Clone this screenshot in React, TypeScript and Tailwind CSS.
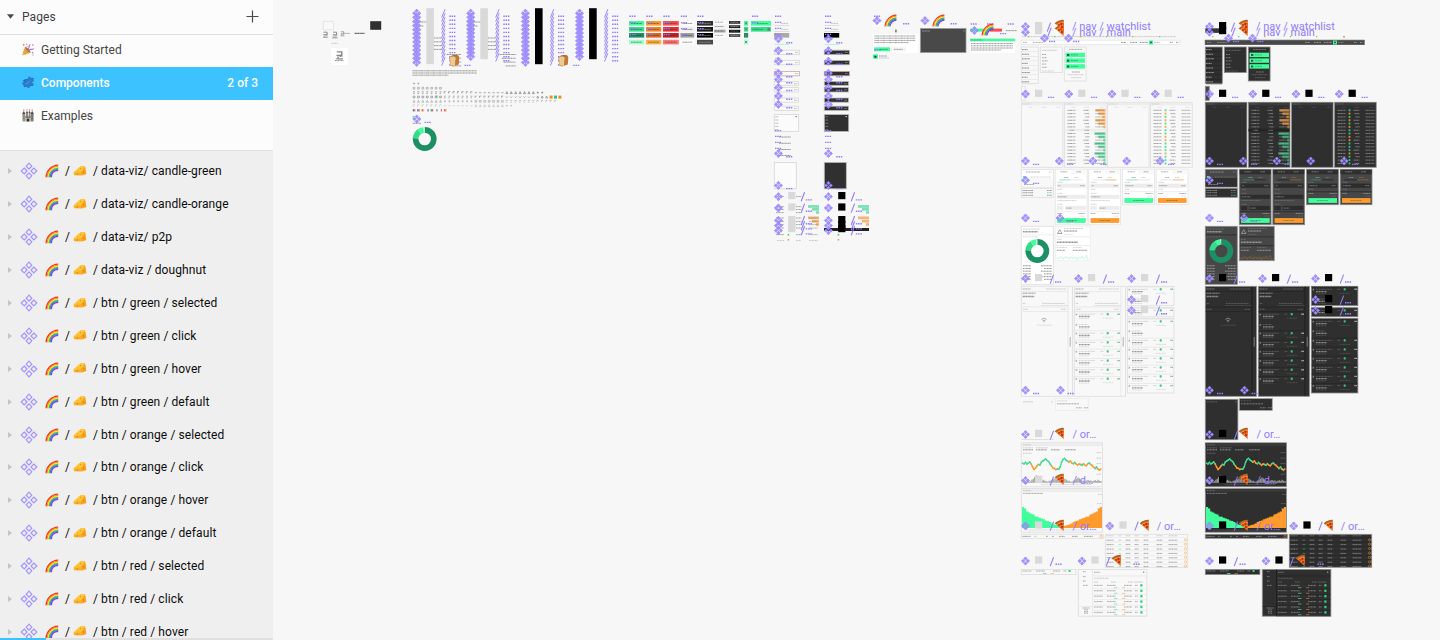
import type { ReactNode } from "react";

const PURPLE = "#8f7cfb";
const GREEN = "#41fd9b";
const ORANGE = "#ff9a2e";
const CANVAS_LEFT = 273;

/* ---------- emoji drawings ---------- */

function Rainbow({ className }: { className?: string }) {
  const bands = ["#ee3124", "#ff8a1f", "#ffe23a", "#45c832", "#2f8df0", "#8a3fd6"];
  return (
    <svg viewBox="0 0 14 14" className={className}>
      {bands.map((c, i) => (
        <path key={c} d={`M${1.1 + i * 1.05} 13.2 C${1.4 + i} ${7 + i * 0.5} ${6 + i * 0.5} ${1.6 + i} 13.2 ${1.2 + i * 1.05}`} fill="none" stroke={c} strokeWidth="1.25" />
      ))}
    </svg>
  );
}

function Cheese({ className }: { className?: string }) {
  return (
    <svg viewBox="0 0 14 12" className={className}>
      <path d="M.6 7.4 6.4 2.2Q9 .2 12 1.6L13.3 9 9.4 9.4 8.6 10.6 1 10.2Z" fill="#fbb028" />
      <path d="M.6 7.4 6.4 2.2Q9 .2 12 1.6L8 7.2Z" fill="#ffc83a" />
      <path d="M8 7.2 12 1.6 13.3 9 8.8 10.6Z" fill="#f7a220" />
      <circle cx="4.3" cy="9" r=".8" fill="#d9840c" />
      <circle cx="7.6" cy="3.6" r=".8" fill="#e8981b" />
      <circle cx="10.8" cy="7" r=".8" fill="#d9840c" />
      <circle cx="5" cy="5.8" r=".6" fill="#e8981b" />
    </svg>
  );
}

function Popper({ className }: { className?: string }) {
  return (
    <svg viewBox="0 0 14 14" className={className}>
      <path d="M.6 13.4 3.6 4.2 9.8 10.4Z" fill="#f2b544" />
      <path d="M2 9.6 4.8 12M2.9 6.8 7.2 11.2" stroke="#c9792c" strokeWidth=".9" />
      <path d="M3.6 4.2C5.6 4 9.8 8 9.8 10.4 7.6 10 4 6.8 3.6 4.2Z" fill="#a9713c" />
      <path d="M6.6 6.6C9 5.4 7.4 3.4 9.4 1.4M8 8C9.6 6 11.4 7.6 13.2 6" fill="none" stroke="#b469d8" strokeWidth="1.2" />
      <circle cx="2.4" cy="2" r=".9" fill="#e8706c" />
      <circle cx="5.6" cy="1.4" r=".8" fill="#8aa7ea" />
      <circle cx="12.2" cy="2.2" r="1" fill="#ef9c9c" />
      <circle cx="12" cy="10.4" r=".9" fill="#e28a5c" />
      <circle cx="12.4" cy="12.8" r=".7" fill="#7ba3ea" />
      <circle cx="6" cy="3.8" r=".8" fill="#f4a83e" />
    </svg>
  );
}

function Puzzle({ className }: { className?: string }) {
  return (
    <svg viewBox="0 0 14 14" className={className}>
      <path d="M5.6 3.8 7.4 3.4Q6.2.8 8.6.6 10.4.6 10 3L13 2.4 13.4 6.2Q11.2 5.8 11.2 7 11.4 8.2 13.2 7.8L12.6 10 8.8 10.2Q9.8 13 7.4 13.2 5.2 13 6 10.8L2.6 11.6 2 9.6Q.2 9 .8 7.4 1.4 6.4 3 7L2.2 4.6Z" fill="#2b7cd0" />
      <path d="M2.2 4.6 5.6 3.8 7.4 3.4M10 3 13 2.4M3 7 2.2 4.6M2.6 11.6 6 10.8M8.8 10.2 12.6 10" fill="none" stroke="#1a589f" strokeWidth=".8" />
      <path d="M4.6 9 9.6 5" stroke="#519ce6" strokeWidth=".9" />
    </svg>
  );
}

function Castle({ className }: { className?: string }) {
  return (
    <svg viewBox="0 0 14 14" className={className}>
      <rect x="1" y="5.2" width="3" height="8.2" fill="#9b9790" />
      <rect x="10" y="5.2" width="3" height="8.2" fill="#817d77" />
      <rect x="4" y="7.4" width="6" height="6" fill="#b5b0a8" />
      <rect x="5" y="4" width="1.8" height="4.4" fill="#77736d" />
      <rect x="7.8" y="4" width="1.8" height="4.4" fill="#8c8882" />
      <path d="M.6 5.4 2.5 2.2 4.4 5.4ZM9.6 5.4 11.5 2.2 13.4 5.4ZM4.7 4.2 5.9 1.8 7.1 4.2ZM7.5 4.2 8.7 1.8 9.9 4.2Z" fill="#504c4b" />
      <path d="M5.7 13.4V11Q7 9.2 8.3 11V13.4Z" fill="#37332f" />
      <path d="M2 7.4H3M11 7.4H12M2 10H3M11 10H12M4.2 8.8H9.8" stroke="#4c4844" strokeWidth=".8" />
      <path d="M2.5.6V2M11.5.6V2M5.9.4V1.6M8.7.4V1.6" stroke="#d3504c" strokeWidth="1" />
    </svg>
  );
}

function Pizza({ x, y }: { x: number; y: number }) {
  return (
    <At x={x} y={y} w={9} h={11.5} local>
      <path d="M.2 3.6Q4 .2 8.4.3L9 3 8.6 11Z" fill="#e0661f" />
      <path d="M.2 3.8Q3.6.4 8.8.5" fill="none" stroke="#a8652a" strokeWidth="1.4" />
      <path d="M2.2 4.6Q5 2.4 8.4 2.6" fill="none" stroke="#ffb52e" strokeWidth=".8" />
      <path d="M4.6 6.8 6 6.2M7.4 5.2 8.4 5.4M7.4 9 8.4 8.6" stroke="#f6a536" strokeWidth=".8" />
      <circle cx="6.4" cy="3.8" r="1.1" fill="#b8221c" />
      <circle cx="4" cy="4.8" r=".9" fill="#c7281f" />
      <circle cx="7" cy="7" r="1" fill="#b8221c" />
    </At>
  );
}

function Bread({ x, y }: { x: number; y: number }) {
  return (
    <At x={x} y={y} w={11} h={12} local>
      <path d="M.5 2.2Q2 .2 6 .4L9 .6Q11 2 10.2 4.2L9.8 9.6 4 11.6.9 10.4.9 5Q0 3.6.5 2.2Z" fill="#c07a38" />
      <path d="M.7 3Q3-.1 6.4 2.6 7.4 4.2 6.2 5.2L6 11 1.2 10.2 1.3 5Z" fill="#eccb90" />
      <path d="M2.6 1Q6-.3 9.4 1" stroke="#96562a" fill="none" strokeWidth=".8" />
    </At>
  );
}

/* ---------- canvas primitives ---------- */

type AtProps = { x: number; y: number; w: number; h: number; local?: boolean; children?: ReactNode };

function At({ x, y, w, h, local, children }: AtProps) {
  return (
    <svg
      className="absolute overflow-visible"
      style={{ left: x - CANVAS_LEFT, top: y }}
      width={w}
      height={h}
      viewBox={local ? `0 0 ${w} ${h}` : `${x} ${y} ${w} ${h}`}
    >
      {children}
    </svg>
  );
}

function Micro({ x, y, w, c = "#999", o = 0.7, t = 1 }: { x: number; y: number; w: number; c?: string; o?: number; t?: number }) {
  return <line x1={x} y1={y} x2={x + w} y2={y} stroke={c} strokeOpacity={o * 0.72} strokeWidth={t} strokeDasharray="1.3 .3 .8 .35 1.9 .45 .6 .25" />;
}

function Box({ x, y, w, h, c, s, o = 1 }: { x: number; y: number; w: number; h: number; c: string; s?: string; o?: number }) {
  return <rect x={x} y={y} width={w} height={h} fill={c} stroke={s} strokeWidth={s ? 0.8 : 0} opacity={o} />;
}

function Gem({ x, y }: { x: number; y: number }) {
  const d = "M0-4.1 1.7-2.4 0-.7-1.7-2.4ZM-2.4-1.7-.7 0-2.4 1.7-4.1 0ZM2.4-1.7 4.1 0 2.4 1.7 .7 0ZM0 .7 1.7 2.4 0 4.1-1.7 2.4Z";
  return <path transform={`translate(${x} ${y})`} d={d} fill="#a292ff" stroke={PURPLE} strokeWidth=".6" />;
}

function Dots({ x, y }: { x: number; y: number }) {
  return <line x1={x} y1={y} x2={x + 6.2} y2={y} stroke={PURPLE} strokeWidth="1.4" strokeDasharray="1.5 .8" />;
}

function Slash({ x, y }: { x: number; y: number }) {
  return <path d={`M${x - 1.8} ${y + 4.6} L${x + 1.6} ${y - 4.4}`} stroke={PURPLE} strokeWidth="1.1" />;
}

function Swatch({ x, y, dark }: { x: number; y: number; dark: boolean }) {
  return <rect x={x} y={y} width="7.2" height="7.2" fill={dark ? "#000" : "#d9d9d9"} />;
}

function Caption({ x, y, children }: { x: number; y: number; children: string }) {
  return (
    <span
      className="absolute whitespace-nowrap font-['Roboto',sans-serif] text-[11px] leading-[12px] text-[#8f7cfb]"
      style={{ left: x - CANVAS_LEFT, top: y }}
    >
      {children}
    </span>
  );
}

function Donut({ x, y }: { x: number; y: number }) {
  const r = 9.1;
  const c = 2 * Math.PI * r;
  const arc = (from: number, size: number, color: string) => (
    <circle cx={x} cy={y} r={r} fill="none" stroke={color} strokeWidth="5.6" strokeDasharray={`${c * size} ${c}`} transform={`rotate(${from * 360 - 90} ${x} ${y})`} />
  );
  return (
    <g>
      {arc(0, 0.76, "#1d8f65")}
      {arc(0.76, 0.14, "#36db8a")}
      {arc(0.9, 0.08, GREEN)}
      {arc(0.98, 0.02, "#a8f9ce")}
    </g>
  );
}

const range = (n: number) => Array.from({ length: n }, (_, i) => i);

/* ---------- themed board column ---------- */

type Theme = { dark: boolean; bg: string; panel: string; line: string; text: string; strong: string; edge: string };

const LIGHT: Theme = { dark: false, bg: "#f8f8f8", panel: "#ffffff", line: "#e2e2e2", text: "#a4a4a4", strong: "#5c5c5c", edge: "#dddddd" };
const DARK: Theme = { dark: true, bg: "#2f2f2f", panel: "#474747", line: "#242424", text: "#8c8c8c", strong: "#c4c4c4", edge: "#8f8f8f" };

function OrderBooks({ t, dx }: { t: Theme; dx: number }) {
  return (
    <At x={1021 + dx} y={102} w={173} h={66}>
      {range(4).map((i) => {
        const x = 1021.3 + dx + i * 43.1;
        return (
          <g key={i}>
            <Box x={x} y={102.3} w={41.6} h={65} c={t.bg} s={t.edge} />
            <Box x={x + 0.5} y={102.8} w={40.6} h={2.6} c={t.dark ? "#3b3b3b" : "#ededed"} />
            <Micro x={x + 1} y={104} w={8} c={t.text} o={0.5} />
            <Micro x={x + 7} y={107.3} w={4} c={t.text} o={0.4} />
            <Micro x={x + 20} y={107.3} w={5} c={t.text} o={0.4} />
            <Micro x={x + 35} y={107.3} w={4} c={t.text} o={0.4} />
            {i % 2 === 1 &&
              range(17).map((r) => {
                const y = 110.3 + r * 3.32;
                if (i === 1 && r === 6) {
                  return (
                    <g key={r}>
                      <Box x={x} y={y - 1.4} w={41} h={2.6} c={t.dark ? "#242424" : "#ededed"} />
                      <Micro x={x + 5} y={y} w={5} c={t.strong} />
                      <Micro x={x + 20} y={y} w={5} c={t.strong} />
                    </g>
                  );
                }
                const widths = [10, 7, 3, 10, 7, 2, 0, 11, 7, 2, 11, 7, 2, 11, 7, 2, 2];
                const fill = i === 1 ? (r < 6 ? ORANGE : "#36cf88") : "none";
                return (
                  <g key={r}>
                    <Micro x={x + 3} y={y} w={8} c={t.strong} o={0.8} />
                    <Micro x={x + 19 + (r % 3)} y={y} w={6 - (r % 3)} c={t.strong} o={0.8} />
                    {i === 1 && <Box x={x + 41 - widths[r]} y={y - 1.3} w={widths[r]} h={2.7} c={fill} o={t.dark ? 0.65 : 0.7} />}
                    {i === 3 && <Box x={x + 14} y={y - 1} w={1.8} h={2} c={r % 4 === 1 || r % 5 === 3 ? ORANGE : "#36db8a"} o={0.85} />}
                    <Micro x={x + 31} y={y} w={9} c={t.strong} o={0.7} />
                  </g>
                );
              })}
          </g>
        );
      })}
    </At>
  );
}

function NavBoards({ t, dx }: { t: Theme; dx: number }) {
  const x = 1021 + dx;
  return (
    <At x={x} y={36} w={160} h={65}>
      {t.dark ? null : <Micro x={x + 1} y={36.6} w={154} c="#aaa" o={0.8} />}
      {[7, 33, 59, 85, 111, 138].map((d, i) => (
        <Box key={d} x={x + d} y={36} w={1.3} h={1.2} c={i % 2 ? "#36db8a" : ORANGE} />
      ))}
      <Box x={x + 0.2} y={40.2} w={159} h={4.4} c={t.panel} s={t.dark ? "#555" : "#e4e4e4"} />
      <Micro x={x + 2} y={42.4} w={4} c={t.strong} />
      <Micro x={x + 12} y={42.4} w={10} c={t.strong} />
      <Micro x={x + 100} y={42.4} w={5} c={t.strong} o={0.9} />
      <Micro x={x + 109} y={42.4} w={7} c={t.strong} o={0.9} />
      <Micro x={x + 119} y={42.4} w={8} c={t.strong} o={0.9} />
      <Micro x={x + 133} y={42.4} w={6} c={t.strong} o={0.6} />
      <Micro x={x + 149} y={42.4} w={3} c={t.strong} o={0.9} />
      <Micro x={x + 155} y={42.4} w={2.4} c={t.strong} o={0.9} />
      <Box x={x + 128} y={40.5} w={4} h={4} c={GREEN} />
      <Box x={x + 129.3} y={41.6} w={1.4} h={1.6} c="#173b2a" />
      <Box x={x + 0.3} y={47} w={17} h={36.3} c={t.bg} s={t.edge} />
      {range(8).map((i) => (
        <g key={i}>
          <Micro x={x + 1} y={49.6 + i * 4.6} w={6 + (i % 3)} c={t.strong} o={1} />
          <Box x={x + 1} y={51.4 + i * 4.6} w={16} h={0.6} c={t.line} />
        </g>
      ))}
      <Box x={x + 19.3} y={47} w={22} h={25.6} c={t.bg} s={t.edge} />
      <Micro x={x + 21} y={50.3} w={15} c={t.text} o={0.8} />
      {range(5).map((i) => (
        <Micro key={i} x={x + 21} y={54.5 + i * 3.2} w={4 + (i % 3)} c={t.strong} />
      ))}
      <Micro x={x + 21} y={71} w={12} c={t.text} o={0.6} />
      <Box x={x + 43.3} y={47} w={21.8} h={34} c={t.bg} s={t.edge} />
      <Micro x={x + 48} y={49.4} w={13} c={t.strong} />
      {[52.7, 58.4, 64.2].map((y) => (
        <g key={y}>
          <Box x={x + 44.5} y={y} w={19.5} h={4.4} c={GREEN} />
          <Box x={x + 46} y={y + 1.3} w={2.3} h={2} c="#1f5f40" />
          <Micro x={x + 50} y={y + 2.2} w={7} c="#147146" />
        </g>
      ))}
      <Micro x={x + 51} y={72} w={8} c={t.strong} />
      <Micro x={x + 46.5} y={74.7} w={16} c={t.text} />
      <Micro x={x + 50} y={77.7} w={10} c={t.text} />
      <Box x={x + 0.3} y={86.3} w={4} h={14} c={t.dark ? "#454545" : "#fafafa"} s={t.edge} />
    </At>
  );
}

function TradeForm({ x, y, h, t, color }: { x: number; y: number; h: number; t: Theme; color: string }) {
  const tall = h > 40;
  const input = t.dark ? "#2c2c2c" : "#ededed";
  return (
    <g>
      <Box x={x} y={y} w={31.8} h={h} c={t.panel} s={t.dark ? "#8a8a8a" : "#e4e4e4"} />
      <Box x={t.dark ? x + 0.4 : x + 16} y={y + 0.4} w={t.dark ? 31 : 15.4} h={4.6} c={t.bg} />
      <Micro x={x + 5} y={y + 2.5} w={7} c={t.strong} />
      <Micro x={x + 21} y={y + 2.5} w={5} c={t.strong} />
      <Micro x={x + 9} y={y + 8.2} w={4} c={t.strong} />
      <Micro x={x + 19} y={y + 8.2} w={4} c={t.text} />
      <Box x={x + 4} y={y + 10.2} w={23} h={0.8} c={t.line} />
      <Box x={color === GREEN ? x + 4 : x + 17} y={y + 10.2} w={11} h={0.8} c={color} o={0.6} />
      <Micro x={x + 2} y={y + 13} w={6} c={t.text} />
      <Box x={x + 1.5} y={y + 14.3} w={29} h={4.2} c={input} />
      <Micro x={x + 3} y={y + 16.4} w={tall ? 2 : 8} c={t.strong} />
      <Micro x={x + 25} y={y + 16.4} w={4} c={t.strong} />
      <Micro x={x + 2} y={y + 20} w={5} c={t.text} />
      {tall && (
        <>
          <Micro x={x + 2} y={y + 24} w={6} c={t.text} />
          <Box x={x + 1.5} y={y + 25.5} w={29} h={4} c={input} />
          <Micro x={x + 2.5} y={y + 27.5} w={9} c={t.strong} />
          <Micro x={x + 2} y={y + 31.3} w={19} c={t.text} />
          <Micro x={x + 2} y={y + 35} w={6} c={t.text} />
          <Box x={x + 1.5} y={y + 36.6} w={6.5} h={4.2} c={input} />
          <Box x={x + 10} y={y + 36.6} w={20.5} h={4.2} c={input} />
          <Micro x={x + 11} y={y + 38.8} w={6} c={t.strong} />
        </>
      )}
      <Box x={x + 0.3} y={y + h - 13.2} w={31.2} h={0.6} c={t.line} />
      <Micro x={x + 2} y={y + h - 11.2} w={5} c={t.strong} />
      <Micro x={x + 23} y={y + h - 11.2} w={7} c={t.strong} />
      <Micro x={x + 25} y={y + h - 8.6} w={5} c={t.text} o={0.5} />
      <Box x={x + 1.8} y={y + h - 6.6} w={28.6} h={4.8} c={color} />
      <Micro x={x + 10.5} y={y + h - 4.2} w={11} c="#2c6a2c" o={0.7} />
    </g>
  );
}

function TradeBoards({ t, dx }: { t: Theme; dx: number }) {
  const x = 1021 + dx;
  const spark = range(44).map((i) => `${x + 35.6 + i * 0.74},${257.8 + Math.sin(i * 2.3) * 0.9 + Math.sin(i * 0.9) * 0.6 - (i > 26 ? Math.sin(i * 1.3) * 1.2 : 0)}`).join(" ");
  return (
    <At x={x} y={169} w={168} h={116}>
      <Box x={x + 0.3} y={169.3} w={32} h={17.8} c={t.panel} s={t.edge} />
      <Box x={x + 0.6} y={178} w={31.4} h={8.6} c={t.bg} />
      <Micro x={x + 5} y={172} w={14} c={t.strong} />
      <Micro x={x + 28} y={172} w={3} c={t.text} />
      <Box x={x + 2} y={176} w={2} h={2} c={GREEN} />
      <Micro x={x + 10} y={177} w={20} c={t.text} o={0.6} />
      <Micro x={x + 3} y={184.5} w={10} c={t.strong} />
      <Box x={x + 0.3} y={188.3} w={32} h={9} c={t.bg} s={t.edge} />
      {[190.5, 192.7, 195.3].map((y, i) => (
        <g key={y}>
          <Micro x={x + 1.5} y={y} w={11} c={t.strong} o={0.8} />
          <Micro x={x + 26} y={y} w={5} c={i === 1 ? "#36ba80" : t.strong} o={0.8} />
        </g>
      ))}
      <TradeForm x={x + 34.3} y={169.3} h={55.4} t={t} color={GREEN} />
      <TradeForm x={x + 67.8} y={169.3} h={55.4} t={t} color={ORANGE} />
      <TradeForm x={x + 101.6} y={169.3} h={35.4} t={t} color={GREEN} />
      <TradeForm x={x + 135.2} y={169.3} h={35.4} t={t} color={ORANGE} />
      <Box x={x + 0.3} y={226.3} w={32} h={58} c={t.panel} s={t.edge} />
      <Micro x={x + 2} y={229} w={17} c={t.text} />
      <Micro x={x + 2} y={231.8} w={15} c={t.strong} o={0.9} t={1.5} />
      <Box x={x + 0.6} y={234.6} w={31.4} h={0.6} c={t.line} />
      <Micro x={x + 2} y={236.8} w={15} c={t.text} o={0.5} />
      <Donut x={x + 16.3} y={251} />
      {range(6).map((i) => (
        <g key={i}>
          <Micro x={x + 2} y={265.8 + i * 2.7} w={8} c={t.strong} o={0.9} />
          <Micro x={x + 20 + (i % 2) * 3} y={265.8 + i * 2.7} w={11 - (i % 2) * 3} c={t.strong} o={0.9} />
        </g>
      ))}
      <Box x={x + 34.3} y={226.3} w={35} h={34.4} c={t.panel} s={t.dark ? "#999" : "#eee"} />
      <path d={`M${x + 36.5} 233.5 l2.2-3.8 2.2 3.8Z`} fill="none" stroke={t.strong} strokeWidth=".7" opacity=".8" />
      <Micro x={x + 43} y={228.5} w={19} c={t.text} />
      <Micro x={x + 43} y={231} w={13} c={t.strong} t={1.4} />
      <Micro x={x + 43} y={234.5} w={9} c={t.text} o={0.5} />
      <Box x={x + 34.6} y={236.6} w={34.4} h={0.6} c={t.line} />
      <Micro x={x + 36} y={239.3} w={5} c={t.text} />
      <Micro x={x + 36} y={242.3} w={21} c={t.strong} o={0.9} t={1.5} />
      <Box x={x + 34.6} y={245} w={34.4} h={0.6} c={t.line} />
      <Micro x={x + 36} y={247.6} w={10} c={t.text} />
      <Micro x={x + 52} y={247.6} w={9} c={t.text} />
      <Micro x={x + 36} y={250.4} w={8} c={t.strong} t={1.4} />
      <Micro x={x + 52} y={250.4} w={14} c={t.strong} t={1.4} />
      <polyline points={spark} fill="none" stroke={t.dark ? "#a06c34" : "#a6efcb"} strokeWidth=".55" />
    </At>
  );
}

function WatchRows({ x, ys, t }: { x: number; ys: number[]; t: Theme }) {
  return (
    <g>
      {ys.map((y, i) => (
        <g key={y}>
          {i !== 1 && <Box x={x + 0.5} y={y - 2.6} w={46} h={0.6} c={t.line} />}
          <Box x={x + 1.6} y={y - 0.6} w={1.5} h={1.8} c={t.text} o={0.8} />
          <Micro x={x + 5} y={y} w={i === 1 ? 9 : 16} c={t.text} o={0.6} />
          <Micro x={x + 5} y={y + 2.3} w={11} c={t.strong} o={0.85} t={1.3} />
          <Micro x={x + 5} y={y + 4.4} w={10} c={t.text} o={0.45} />
          {i !== 1 && (
            <>
              <Micro x={x + 26.5} y={y} w={3} c={t.text} />
              <Box x={x + 32.7} y={y - 1.1} w={2} h={2.2} c="#35c77c" />
              <Micro x={x + 43.4} y={y} w={2.6} c={t.dark ? "#eee" : "#3c9a6c"} o={1} t={1.4} />
              <Micro x={x + 29} y={y + 4} w={10} c={t.text} o={0.45} />
            </>
          )}
        </g>
      ))}
    </g>
  );
}

function WatchBoards({ t, dx }: { t: Theme; dx: number }) {
  const x = 1021 + dx;
  return (
    <At x={x} y={286} w={154} h={155}>
      {[x, x + 53].map((bx, i) => (
        <g key={bx}>
          <Box x={bx + 0.3} y={286.3} w={51.2} h={110} c={t.bg} s={t.edge} />
          <Box x={bx + 46.6} y={286.6} w={0.7} h={109.4} c={t.dark ? "#181818" : t.line} />
          <Micro x={bx + 1.6} y={289} w={8} c={t.strong} />
          <Micro x={bx + 25} y={289} w={20} c={t.text} />
          <Box x={bx + 0.6} y={291} w={46} h={0.6} c={t.line} />
          <Micro x={bx + 1.6} y={293.2} w={13} c={t.strong} o={0.9} />
          <Micro x={bx + 1.6} y={296.6} w={12} c={t.strong} o={0.9} t={1.5} />
          <Micro x={bx + 1.6} y={303.4} w={3} c={t.text} />
          <Micro x={bx + 21} y={303.4} w={23} c={t.text} />
          <Box x={bx + 20} y={305} w={26.6} h={0.6} c={t.text} o={0.4} />
          <Box x={bx + 0.6} y={306.6} w={46} h={0.7} c={t.line} />
          <Micro x={bx + 2} y={309.3} w={5} c={t.text} />
          <Micro x={bx + 40} y={309.3} w={5} c={t.text} />
          <Box x={bx + 0.6} y={311.2} w={46} h={0.6} c={t.line} />
          <Box x={bx + 48.6} y={337} w={1.2} h={9.6} c={t.text} o={0.7} />
          {i === 0 ? (
            <>
              <path d={`M${bx + 20.4} 319.4q2.6-2.6 5.2 0M${bx + 21.6} 320.8q1.4-1.2 2.8 0`} fill="none" stroke={t.text} strokeWidth=".9" />
              <circle cx={bx + 23} cy="321.8" r=".6" fill={t.text} />
              <Micro x={bx + 16} y={325.2} w={15} c={t.text} o={0.5} />
            </>
          ) : (
            <WatchRows x={bx} ys={[314.2, 324.5, 333.2, 342.4, 351.4, 360.6, 369.7, 378.7]} t={t} />
          )}
        </g>
      ))}
      {[
        [286.3, 19.4],
        [307.8, 9],
        [318.6, 74.4],
      ].map(([y, h]) => (
        <Box key={y} x={x + 106.3} y={y} w={46.6} h={h} c={t.bg} s={t.edge} />
      ))}
      <WatchRows x={x + 106} ys={[289.3, 299]} t={t} />
      <WatchRows x={x + 106} ys={[310.4]} t={t} />
      <WatchRows x={x + 106} ys={[321.4, 331, 340.4, 349.4, 358.4, 367.4, 376.4, 385.6]} t={t} />
      {t.dark ? (
        <Box x={x + 0.3} y={399.3} w={32.6} h={40.4} c={t.bg} s={t.edge} />
      ) : (
        <Box x={x + 0.3} y={439} w={32.6} h={0.9} c="#dcdcdc" />
      )}
      <Micro x={x + 2} y={401.8} w={10} c={t.text} />
      <Micro x={x + 30} y={401.8} w={2} c={t.text} />
      <Box x={x + 34.3} y={398.4} w={33} h={12} c={t.bg} s={t.dark ? "#aaa" : "#ececec"} />
      <Micro x={x + 36} y={400.8} w={10} c={t.text} o={0.5} />
      <Micro x={x + 36} y={403.8} w={22} c={t.strong} />
      <Micro x={x + 55} y={407.8} w={6} c={t.strong} />
      <Micro x={x + 63} y={407.8} w={4} c={t.strong} />
    </At>
  );
}

const PRICE = [18, 19, 17.4, 19, 18, 17, 19, 22, 24.5, 23, 21, 19.4, 20, 17, 16, 15, 14, 15.5, 16.4, 19, 21, 23, 23.4, 24.6, 24, 24.2, 22, 17, 14.4, 13.4, 15, 16, 17.2, 16, 18, 18.8, 17.5, 19, 20.2, 19, 19.5, 20.2, 18.8, 20, 20.8, 18.8, 18, 19.4, 20.5, 22, 23.6, 22, 24, 25.2, 24];
const VOLUME = [1, 2, 1, 3, 1, 1.5, 3, 4, 6, 7.4, 7, 6.8, 3, 2, 3, 2, 1.6, 1, 2, 2.2, 3, 3.4, 4.4, 3.6, 4, 5.4, 4.6, 3.6, 4, 4, 3, 2, 2, 1, 1.4, 2.2, 2.6, 4, 5.2, 4.4, 3, 1.6, 2, 1.4, 2.2, 2.8, 2, 2.4, 1.4, 2, 2.6, 1.8, 3, 2, 1.6];
const DEPTH = [21, 19.6, 16.6, 15.6, 14.2, 13.6, 11.6, 11.2, 10.2, 9.4, 8.8, 7.4, 7, 6, 4.6, 3.6, 3, 2.2, 1.4];

function depthPath(x0: number, dir: 1 | -1) {
  let d = `M${x0} 528V${528 - DEPTH[0]}`;
  DEPTH.forEach((h, i) => {
    d += `V${528 - h}H${x0 + dir * (i + 1) * 2.1}`;
  });
  return `${d}V528Z`;
}

function ChartBoards({ t, dx }: { t: Theme; dx: number }) {
  const x = 1021 + dx;
  return (
    <At x={x} y={442} w={168} h={175}>
      <Box x={x + 0.3} y={442.8} w={81.2} h={44} c={t.bg} s={t.edge} />
      <Box x={x + 0.7} y={443.2} w={80.4} h={3} c={t.dark ? "#3a3a3a" : "#ececec"} />
      <Micro x={x + 2} y={444.8} w={8} c={t.text} />
      <Micro x={x + 2} y={447.8} w={10} c={t.text} />
      <Micro x={x + 15} y={447.8} w={12} c={t.text} />
      {[[2, 10], [15, 11], [30, 9], [44, 11]].map(([d, w]) => (
        <Micro key={d} x={x + d} y={449.8} w={w} c={t.strong} o={0.9} />
      ))}
      <Micro x={x + 2} y={453.3} w={9} c={t.text} />
      {[452.6, 458.2, 463.6, 469, 474.2].map((y) => (
        <Micro key={y} x={x + 75.5} y={y} w={5} c={t.text} />
      ))}
      {PRICE.slice(1).map((p, i) => (
        <line key={i} x1={x + 1.5 + i * 1.45} y1={445 + PRICE[i]} x2={x + 2.95 + i * 1.45} y2={445 + p} stroke={(i > 5 && i < 11) || (i > 19 && i < 24) || (i > 29 && i % 5 > 1) ? ORANGE : "#3fdc91"} strokeWidth="1.4" strokeLinecap="square" />
      ))}
      {VOLUME.map((v, i) => (
        <Box key={i} x={x + 1.5 + i * 1.44} y={482.8 - v} w={1.5} h={v} c={t.dark ? "#929292" : "#ababab"} />
      ))}
      <Micro x={x + 20} y={484.6} w={50} c={t.text} o={0.5} />
      <Box x={x + 0.3} y={488.6} w={81.2} h={43.6} c={t.bg} s={t.edge} />
      <Box x={x + 0.7} y={489} w={80.4} h={3} c={t.dark ? "#383838" : "#ededed"} />
      <Micro x={x + 2} y={490.6} w={8} c={t.text} />
      <Micro x={x + 2} y={493.4} w={20} c={t.strong} />
      <Micro x={x + 77} y={494.4} w={4} c={t.text} />
      {[503.6, 509, 514].map((y) => (
        <Micro key={y} x={x + 76} y={y} w={4.5} c={t.text} />
      ))}
      <path d={depthPath(x + 1, 1)} fill={GREEN} />
      <path d={depthPath(x + 81, -1)} fill={ORANGE} />
      <Micro x={x + 6} y={530} w={70} c={t.text} o={0.5} />
      <Box x={x + 0.3} y={534.3} w={82} h={4} c={t.bg} s={t.edge} />
      {[1.5, 13, 25, 31, 38, 51, 63].map((d, i) => (
        <Micro key={d} x={x + d} y={536.4} w={[8, 3, 2, 2, 6, 6, 9][i]} c={i === 1 ? "#3ddc8e" : t.strong} o={0.8} />
      ))}
      <circle cx={x + 80} cy={536.4} r="1.2" fill="none" stroke={ORANGE} strokeWidth=".6" opacity=".8" />
      <Box x={x + 84.3} y={534.3} w={82.4} h={33} c={t.bg} s={t.edge} />
      {range(8).map((r) => (
        <g key={r}>
          {[1, 13, 20, 29, 38, 51, 63].map((d, i) => (
            <Micro key={d} x={x + 84.6 + d} y={535.8 + r * 4.4} w={[7, 3, 5, 4, 5, 6, 9][i]} c={r > 0 && i === 1 ? "#3ddc8e" : r ? t.strong : t.text} o={0.75} />
          ))}
          {r < 7 && <Box x={x + 84.6} y={537.4 + r * 4.4} w={82} h={0.5} c={t.line} />}
          {r > 0 && <circle cx={x + 164.5} cy={535.4 + r * 4.4} r="1.1" fill="none" stroke={ORANGE} strokeWidth=".6" opacity=".8" />}
        </g>
      ))}
      <Box x={x + 0.3} y={569.4} w={54.6} h={5.2} c={t.bg} s={t.edge} />
      <Micro x={x + 1.5} y={571} w={9} c={t.strong} />
      <Micro x={x + 15} y={571} w={9} c={t.strong} />
      <Micro x={x + 32} y={571} w={7} c={t.strong} />
      <Micro x={x + 42.5} y={571} w={3} c={t.strong} />
      <Box x={x + 47.5} y={570} w={2} h={2} c="#2fd37f" />
      <Box x={x + 22} y={573} w={3.5} h={0.8} c="#5be3a1" />
      <Box x={x + 29.5} y={573} w={3.5} h={0.8} c={ORANGE} o={0.6} />
      <Box x={x + 57.3} y={569.4} w={68.6} h={46.8} c={t.bg} s={t.edge} />
      <Box x={x + 71.2} y={569.4} w={0.7} h={46.8} c={t.dark ? "#1c1c1c" : t.line} />
      {[571.6, 576.6, 581, 585.4].map((y, i) => (
        <Micro key={y} x={x + 62} y={y} w={i === 3 ? 5 : 3} c={t.strong} />
      ))}
      {[608, 609.8, 611.6, 613.2].map((y, i) => (
        <Micro key={y} x={x + (i ? 63 : 61.5)} y={y} w={i ? 4 : 7} c={t.strong} />
      ))}
      <Box x={x + 57.6} y={606.2} w={13.6} h={0.6} c={t.line} />
      <Micro x={x + 73} y={572.3} w={6} c={t.strong} />
      <Box x={x + 122} y={571.6} w={1.3} h={1.3} c={t.strong} o={0.7} />
      <Box x={x + 72} y={575.6} w={53.6} h={0.7} c={t.line} />
      <Micro x={x + 73} y={578.3} w={15} c={t.text} />
      {[[73, 4], [90, 5], [107, 5], [113, 9]].map(([d, w]) => (
        <Micro key={d} x={x + d} y={582} w={w} c={t.text} o={0.8} />
      ))}
      {range(6).map((r) => {
        const y = 585.4 + r * 5.4;
        return (
          <g key={r}>
            <Micro x={x + 73} y={y} w={9} c={t.strong} />
            <Micro x={x + 86} y={y} w={9} c={t.strong} />
            <Micro x={x + 103} y={y} w={8} c={t.strong} />
            <Micro x={x + 114} y={y} w={3} c={t.strong} />
            <Box x={x + 119.3} y={y - 1.2} w={2.2} h={2.4} c="#2fd37f" />
            <Box x={x + 93} y={y + 2} w={3.5} h={0.8} c="#5be3a1" o={0.8} />
            <Box x={x + 101} y={y + 2} w={3.5} h={0.8} c={ORANGE} o={0.6} />
            <Box x={x + 72} y={y + 3.3} w={53.6} h={0.5} c={t.line} />
          </g>
        );
      })}
    </At>
  );
}

const GEMS: [number, number][] = [
  [1025.5, 26.5], [1025.5, 32.2], [1044.5, 38.2], [1068.5, 38.2],
  [1025.5, 94], [1068.8, 94], [1112, 94], [1155.2, 94],
  [1025.5, 161], [1059.3, 161], [1092.8, 161], [1126.7, 161], [1160.2, 161],
  [1025.5, 180.2], [1025.5, 218], [1060, 218],
  [1025.5, 278.6], [1078.5, 278.6], [1131.5, 278.6], [1131.5, 299.6], [1131.5, 310.5],
  [1025.5, 390.2], [1060.5, 390.2],
  [1025.5, 434.5], [1025.5, 480.5], [1025.5, 526], [1109.7, 526], [1025.5, 561], [1082, 561],
];
const ELLIPSES: [number, number][] = [
  [1049, 41.5], [1073.2, 41.5], [1048, 97.4], [1091, 97.4], [1134.3, 97.4], [1177.6, 97.4],
  [1033, 164.4], [1067, 164.4], [1100.4, 164.4], [1168, 164.4], [1033, 183.4], [1033, 221.4], [1067, 221.4],
  [1055, 282], [1108, 282], [1161, 282], [1161, 302.7], [1161, 313.8], [1033, 393.5], [1067.5, 393.5],
  [1055.5, 564.2], [1133.5, 564.2],
];
const SWATCHES: [number, number][] = [
  [1035, 22], [1035, 27], [1035, 89.7], [1078.2, 89.7], [1121.4, 89.7], [1164.6, 89.7],
  [1035, 274], [1088, 274], [1141, 274], [1141, 295], [1141, 306],
  [1035, 429.8], [1035, 475.7], [1035, 521.4], [1119.4, 521.4], [1035, 556.4], [1091.4, 556.4],
];
const SLASHES: [number, number][] = [
  [1049, 27], [1049.6, 32], [1052, 279], [1105, 279], [1158, 279], [1158, 300], [1158, 311],
  [1052, 435], [1052, 481], [1052, 526], [1136.6, 526], [1052, 561.5], [1108, 561.5],
];

function ThemeColumn({ t, dx }: { t: Theme; dx: number }) {
  return (
    <>
      <NavBoards t={t} dx={dx} />
      <OrderBooks t={t} dx={dx} />
      <TradeBoards t={t} dx={dx} />
      <WatchBoards t={t} dx={dx} />
      <ChartBoards t={t} dx={dx} />
      {t.dark && (
        <At x={1205} y={28} w={16} h={6}>
          <Box x={1205.3} y={28.3} w={15} h={4.6} c="#383838" />
        </At>
      )}
      <At x={1021 + dx} y={20} w={170} h={550}>
        <g transform={`translate(${dx} -20) translate(0 20)`}>
          {SWATCHES.map(([x, y]) => <Swatch key={`${x}-${y}`} x={x} y={y} dark={t.dark} />)}
          {GEMS.map(([x, y]) => <Gem key={`${x}-${y}`} x={x} y={y} />)}
          {ELLIPSES.map(([x, y]) => <Dots key={`${x}-${y}`} x={x} y={y} />)}
          {SLASHES.map(([x, y]) => <Slash key={`${x}-${y}`} x={x} y={y} />)}
        </g>
      </At>
      {[[1055, 25], [1055, 20], [1055, 428], [1055, 474.3], [1055, 520], [1139.6, 520], [1111.8, 555]].map(([x, y]) => (
        <Pizza key={`${x}-${y}`} x={x + dx} y={y} />
      ))}
      <Caption x={1072 + dx} y={21}>/ nav / watchlist</Caption>
      <Caption x={1072 + dx} y={27}>/ nav / main</Caption>
      <Caption x={1072.4 + dx} y={429}>/ or…</Caption>
      <Caption x={1072.4 + dx} y={475}>/ d…</Caption>
      <Caption x={1072.4 + dx} y={520.5}>/ or…</Caption>
      <Caption x={1156.8 + dx} y={520.5}>/ or…</Caption>
    </>
  );
}

/* ---------- left part of the canvas ---------- */

function LogoBoards() {
  return (
    <At x={322} y={20} w={60} h={46}>
      <Box x={323.3} y={21.3} w={10} h={8.6} c="#f9f9f9" s="#e0e0e0" />
      <Box x={370.2} y={21.2} w={11} h={8.6} c="#303030" />
      {[[325.5, 34.5, 1], [335, 34.5, 1], [342.5, 33.6, 0.8], [339.6, 55, 1.4]].map(([x, y, s], i) => (
        <g key={i}>
          {i === 3 && <Box x={331} y={48} w={17} h={17} c="#fff" />}
          <g transform={`translate(${x} ${y}) scale(${s})`}>
            <path d="M-2-2.3H1.6V1.2M-2.2.2H.4M-2.4 2.7H2.4M-1.6 1.2-.6 2M1.6-1 .2 1.4" stroke="#858585" fill="none" strokeWidth=".9" />
          </g>
        </g>
      ))}
      <Micro x={332} y={38.4} w={6} />
      <Micro x={344.5} y={33.4} w={6} c="#555" />
      <Micro x={354.6} y={33.4} w={10} c="#333" o={1.1} t={1.4} />
      <Micro x={331.5} y={43.3} w={6.5} />
      <Micro x={335} y={60.6} w={9} c="#555" o={0.9} />
    </At>
  );
}

function TypeColumns() {
  const sets = [
    { x: 416.7, n: 13, dark: false, h: 56 },
    { x: 470.7, n: 12, dark: false, h: 51 },
    { x: 525.4, n: 13, dark: true, h: 56 },
    { x: 579.5, n: 12, dark: true, h: 51 },
  ];
  return (
    <At x={412} y={8} w={210} h={70}>
      {sets.map((s, k) => (
        <g key={s.x}>
          {!s.dark && range(3).map((i) => <Micro key={i} x={s.x - 4} y={22 + i * 4} w={14 - i * 3} c="#333" />)}
          {!s.dark && range(4).map((i) => <Micro key={i} x={s.x + 17} y={38 + i * 3.8} w={9} c="#333" />)}
          {k === 0 && range(4).map((i) => <Micro key={i} x={s.x + 30 + i * 2.4} y={54.5 + i * 3.8} w={14.5 - i * 2.4} c="#333" />)}
          {k === 1 && range(4).map((i) => <Micro key={i} x={s.x + 29 + i * 2} y={54.5 + i * 3.8} w={16 - i * 2} c="#333" />)}
          {range(s.n).map((i) => <Gem key={i} x={s.x} y={13.2 + i * (s.n === 13 ? 4.1 : 3.95)} />)}
          <Box x={s.x + 9.6} y={8.2} w={7.6} h={s.h} c={s.dark ? "#000" : "#d9d9d9"} />
          {range(s.n).map((i) => (
            <g key={i}>
              <path d={`M${s.x + 25} ${17.6 + i * 4} L${s.x + 28.4} ${9.2 + i * 4}`} stroke={PURPLE} strokeWidth=".9" />
              <Dots x={s.x + 32.6} y={16.2 + i * 4.05} />
            </g>
          ))}
          {k % 2 === 0 && <Dots x={s.x + 47.8} y={65.4} />}
        </g>
      ))}
      {[70.8, 73, 75.2].map((y, i) => (
        <Micro key={y} x={412.5} y={y} w={i === 2 ? 36 : 64} c="#333" />
      ))}
    </At>
  );
}

const ICON_ROWS = [
  { y: 83.5, n: 2, o: 0.5 },
  { y: 88.2, n: 7, o: 0.5 },
  { y: 92.6, n: 30, o: 0.75 },
  { y: 97, n: 31, o: 0.65 },
  { y: 101.3, n: 33, o: 0.45 },
  { y: 105.7, n: 23, o: 0.3 },
];
const GLYPHS = ["M-1-.8H1M-1 .8H.6", "M-.9-.9H.9V.9H-.9Z", "M0-1V1M-1 0H1", "M-1 1 0-1 1 1Z", "M-1-.5 0 .6 1-.5", "M-.8.9V-.9H.9"];
const FLAGS: [string, string][] = [["#315b9b", "#d85b61"], ["#29449a", "#e25055"], ["#d74141", "#f2bd35"], ["#fff", "#3a49a0"], ["#2a9950", "#dc3f3c"], ["#fff", "#4267ae"], ["#fff", "#dd4545"], ["#e43b3a", "#e97a45"]];

function IconSheet() {
  return (
    <At x={412} y={82} w={156} h={70}>
      {ICON_ROWS.map((r) =>
        range(r.n).map((i) => (
          <path
            key={`${r.y}-${i}`}
            transform={`translate(${414 + i * 4.42} ${r.y})`}
            d={GLYPHS[(i * 5 + r.n + (i % 7)) % GLYPHS.length]}
            stroke="#666"
            strokeOpacity={r.o}
            strokeWidth=".75"
            fill="none"
          />
        )),
      )}
      <Box x={436} y={95.5} w={1.6} h={1.6} c="#35dc86" />
      {["#f58a20", "#22c97a", "#f58a20"].map((c, i) => (
        <Box key={i} x={549.6 + i * 4.4} y={95.6} w={3} h={3} c={c} />
      ))}
      {FLAGS.map(([a, b], i) => (
        <g key={i}>
          <Box x={412.8 + i * 4.45} y={109.2} w={1.3} h={2.2} c={a} o={0.85} />
          <Box x={414.1 + i * 4.45} y={109.2} w={1.2} h={2.2} c={b} o={0.85} />
        </g>
      ))}
      <Box x={412.4} y={116} w={2} h={1.5} c={GREEN} />
      <Gem x={416.8} y={119} />
      <Micro x={412.6} y={123.3} w={8.5} c="#333" />
      <Dots x={424.6} y={122.4} />
      <Donut x={424.7} y={139} />
    </At>
  );
}

function Buttons() {
  const cols: { x: number; w: number; c: string[] }[] = [
    { x: 629, w: 15.2, c: [GREEN, "#36dd8b", "#1d8f65", "#a0ffcd"] },
    { x: 646, w: 15.2, c: ["#ff9a2e", "#f08428", "#dd6526", "#ffaf45"] },
    { x: 663, w: 15.8, c: ["#f94e50", "#e62e34", "#c61f27", "#ff7474"] },
    { x: 680.4, w: 13.8, c: ["#fdfdfd", "#efefef", "#9f9f9f", "#ffffff"] },
    { x: 697, w: 16, c: ["#303030", "#1b1b1b", "#000000", "#484848"] },
  ];
  const ys = [21, 27, 33, 39.8];
  return (
    <At x={628} y={14} w={145} h={32}>
      {cols.map((col) => (
        <g key={col.x}>
          <Dots x={col.x + 0.4} y={16.3} />
          {col.c.map((c, i) => (
            <g key={i}>
              <Box x={col.x} y={ys[i]} w={col.w} h={4.6} c={c} />
              <Micro x={col.x + 2} y={ys[i] + 2.4} w={col.w - 4} c={col.x === 697 ? "#bbb" : "#333"} o={0.8} />
              {i < 3 && <Dots x={col.x + 0.5} y={ys[i] + 1.6} />}
            </g>
          ))}
        </g>
      ))}
      {[22.2, 26.5, 31, 35.3].map((y, i) => (
        <g key={y}>
          <Box x={714} y={y - 1.3} w={11.6} h={2.8} c={["#fff", "#f0f0f0", "#a8a8a8", "#fff"][i]} />
          <Micro x={715} y={y} w={8.6} c="#444" />
          <Box x={729} y={y - 1.2} w={11.2} h={2.8} c={["#303030", "#1f1f1f", "#000", "#444"][i]} />
          <Micro x={730.5} y={y} w={8} c="#ddd" />
        </g>
      ))}
      {ys.map((y, i) => (
        <g key={y}>
          <Box x={744} y={y} w={4.2} h={4.6} c={[GREEN, "#36dd8b", "#1d8f65", "#a0ffcd"][i]} />
          <Box x={745.2} y={y + 1.4} w={1.7} h={1.8} c="#777" />
        </g>
      ))}
      <Dots x={752} y={16.3} />
      <Box x={751} y={21} w={20} h={4.6} c={GREEN} />
      <Dots x={752} y={22.8} />
      <Micro x={757} y={23.6} w={11} c="#17593b" />
      <Box x={751} y={27} w={20} h={4.6} c="#36dd8b" />
      <Micro x={752.4} y={29.4} w={11} c="#17593b" />
      <Box x={767.5} y={28.2} w={2.4} h={2.4} c="#56806d" />
    </At>
  );
}

function FormColumn({ x, dark }: { x: number; dark: boolean }) {
  const fill = dark ? "#303030" : "#fbfbfb";
  const edge = dark ? "#b8b8b8" : "#d6d6d6";
  const ink = dark ? "#ddd" : "#666";
  const fields = [[50.2, 4.4, 25.2], [60.4, 4.4, 25.2], [71.4, 4.4, 25.2], [81.5, 3.8, 24.2], [87.6, 4.4, 24.2], [98, 4.2, 24.2], [106.2, 4.2, 24.2]];
  const gems = [38.8, 50.6, 61.2, 73.3, 79.4, 87.7, 96, 104.4, 153.5, 185.4];
  const dots = [16.3, 22.4, 28.4, 34.4];
  const side = [42.7, 53.8, 64.3, 76.8, 82.8, 90.5, 99.3, 107.8, 156.8, 188.6];
  return (
    <At x={x} y={14} w={50} h={230}>
      {[25, 31].map((y) => (
        <g key={y}>
          <Micro x={x + 7} y={y - 1.6} w={7} c="#888" />
          <Box x={x + 0.5} y={y} w={15} h={0.7} c="#d2d2d2" />
        </g>
      ))}
      <Box x={x} y={33} w={15.2} h={4.6} c={dark ? "#000" : "#aaaaaa"} />
      <Box x={x + 0.5} y={44} w={15} h={0.7} c="#a5edc9" />
      {fields.map(([y, h, w], i) => (
        <g key={y}>
          <Box x={x + 0.3} y={y} w={w} h={h} c={fill} s={i === 2 ? "#c9a8a4" : edge} />
          <Micro x={x + w - 4} y={y + 2.2} w={3} c={ink} />
          {i < 3 && !dark && <Micro x={x + 1} y={y - 2} w={3} />}
        </g>
      ))}
      <Box x={x + 0.3} y={114.6} w={24.4} h={16.8} c={fill} s={edge} />
      {range(5).map((i) => <Micro key={i} x={x + 1.4} y={116.8 + i * 3.2} w={3} c={ink} />)}
      <Box x={x + 21.6} y={116} w={1.2} h={1.2} c={ink} />
      {!dark && [137, 143.3, 149.5, 155.5].map((y) => <Micro key={y} x={x + 5} y={y} w={12} c="#333" />)}
      <Box x={x + 0.3} y={162.4} w={22} h={26.4} c={fill} s={edge} />
      {dark && <Box x={x} y={228} w={45} h={3} c="#222" />}
      {[196.5, 206.6, 209.5, 212.6, 218, 221.4, 224.6, 228, 234.6].map((y, i) => (
        <g key={y}>
          {!dark && <Micro x={x + 2} y={y} w={8} c="#555" />}
          {!dark && <Micro x={x + 22} y={y} w={5.5} c="#555" />}
          {i > 0 && i < 4 && <Box x={x + 34 + (i - 1) * 4} y={y - 1.5} w={11 - (i - 1) * 4} h={2.7} c="#45d795" o={0.7} />}
          {i > 3 && i < 7 && <Box x={x + 34 + (i - 4) * 4} y={y - 1.5} w={11 - (i - 4) * 4} h={2.7} c="#f7a85d" o={0.85} />}
          {i > 3 && !dark && <Micro x={x + 35} y={y} w={9} c="#777" />}
        </g>
      ))}
      <Box x={x + 13.6} y={234} w={1.6} h={1.6} c="#36cf88" />
      <Box x={x + 13.6} y={239} w={1.6} h={1.6} c="#f4a040" />
      {!dark && <Micro x={x + 3} y={240.6} w={7} />}
      {!dark && <Micro x={x + 22} y={240.6} w={5} />}
      {!dark && <Micro x={x + 35} y={240.6} w={9} />}
      {[192, 203.4, 216, 221, 225].map((y) => <Swatch key={y} x={x + 14.2} y={y} dark={dark} />)}
      {[196.6, 208, 220.4, 225.6, 230.6].map((y) => (
        <g key={y}>
          <Gem x={x + 4.4} y={y} />
          <Slash x={x + 29} y={y} />
          <Dots x={x + 31.8} y={y + 3.3} />
        </g>
      ))}
      {gems.map((y) => <Gem key={y} x={x + 4.4} y={y} />)}
      {dots.concat([130.6, 136.4, 142.4, 148.4]).map((y) => <Dots key={y} x={x + 1} y={y} />)}
      {side.map((y) => <Dots key={y} x={x + 12.2} y={y} />)}
    </At>
  );
}

function DialogBoards() {
  return (
    <>
      <At x={870} y={14} w={146} h={48}>
        <Dots x={874} y={16.2} />
        <Box x={873.3} y={23} w={18} h={3.5} c="#fff" />
        <Box x={895} y={29.6} w={1.8} h={2.8} c="#888" />
        <Box x={873} y={34} w={45} h={19} c="#fff" />
        {[36, 38.2, 40.4, 42.6].map((y, i) => <Micro key={y} x={874.4} y={y} w={i === 3 ? 34 : 41} c="#333" />)}
        <Box x={874} y={47.3} w={16} h={4} c={GREEN} />
        <Dots x={874.4} y={49.8} />
        <Box x={891} y={47.3} w={15} h={4} c="#f2f2f2" />
        <Micro x={894} y={49.4} w={9} c="#555" />
        <Micro x={880} y={49.4} w={8} c="#17593b" />
        <Box x={873} y={54.4} w={5} h={4.4} c={GREEN} />
        <Box x={874.4} y={55.7} w={2} h={2} c="#163c29" />
        <Micro x={879} y={56} w={8} c="#444" />
        <Micro x={879} y={58} w={10} />
        <Box x={920.4} y={28.5} w={45.6} h={24} c="#494949" s="#999" />
        <Micro x={922} y={31} w={8} c="#ddd" />
        <Box x={963.4} y={30.4} w={1.2} h={1.2} c="#888" />
        <Dots x={970.6} y={24} />
        <Dots x={987} y={24} />
        <Dots x={1007.6} y={24} />
        <Box x={970} y={28.6} w={14} h={3} c={GREEN} />
        <Box x={990} y={28.6} w={12} h={3} c="#fb4b50" />
        <Micro x={1006} y={30.6} w={11} c="#333" />
        <Box x={970} y={38.6} w={45.2} h={2.8} c={GREEN} />
        <Micro x={971} y={40} w={11} c="#218b59" />
        <Box x={970} y={41.6} w={45.2} h={11.2} c="#fff" />
        {[43.6, 45.8, 48, 50].map((y, i) => <Micro key={y} x={971} y={y} w={i === 3 ? 30 : 42} c="#333" />)}
        <Gem x={877} y={20.6} />
        <Gem x={925} y={20.6} />
        <Gem x={974.4} y={30.5} />
        <Dots x={903} y={23.8} />
        <Dots x={950.5} y={23.8} />
        <Dots x={1000} y={33.6} />
      </At>
      {[[884, 13.5], [931.5, 13.5], [981.4, 23.4]].map(([x, y]) => (
        <At key={x} x={x} y={y} w={13} h={13} local>
          {["#e5352b", "#ff8a1f", "#ffe23a", "#45b832", "#3588e8", "#7d43c8"].map((c, i) => (
            <path key={c} d={`M${0.9 + i} 12.4 C${1.4 + i} ${6.5 + i * 0.5} ${6 + i * 0.5} ${1.4 + i} 12.4 ${1.1 + i}`} fill="none" stroke={c} strokeWidth="1.15" />
          ))}
        </At>
      ))}
    </>
  );
}

/* ---------- sidebar ---------- */

const PAGES = [
  { name: "Getting Started", Icon: Popper, active: false },
  { name: "Components", Icon: Puzzle, active: true },
  { name: "Examples", Icon: Castle, active: false },
];

const LAYERS = [
  "data-viz/ candle-green", "data-viz/ candle-orange", "data-viz/ p2p", "data-viz / doughnut",
  "btn / green / selected", "btn / green / click", "btn / green / hover", "btn / green / default",
  "btn / orange / selected", "btn / orange / click", "btn / orange / hover", "btn / orange / default",
  "btn / red / selected", "btn / red / click", "btn / red / hover",
];

function SymbolIcon() {
  return (
    <svg viewBox="0 0 18 18" className="ml-[8px] h-[18px] w-[18px] shrink-0 fill-none stroke-[#a294ff] stroke-[1.2]">
      <path d="M9 1.2 11.8 4.2 9 7.2 6.2 4.2ZM4.2 6 7 9 4.2 12 1.2 9ZM13.8 6 16.8 9 13.8 12 11 9ZM9 10.8 11.8 13.8 9 16.8 6.2 13.8Z" />
    </svg>
  );
}

function Sidebar() {
  return (
    <aside className="relative flex h-full w-[273px] shrink-0 flex-col overflow-hidden bg-[#efefef] font-['Roboto',sans-serif] text-[12px] leading-4">
      <header className="flex h-[33.5px] shrink-0 items-center bg-[#fcfcfc] pl-[7px] pr-[14px] text-[#3f3f3f]">
        <svg viewBox="0 0 7 5" className="h-[5px] w-[7px] fill-[#4a4a4a]"><path d="M0 .2H7L3.5 4.8Z" /></svg>
        <span className="ml-2 flex-1 tracking-[0.1px]">Pages</span>
        <svg viewBox="0 0 13 13" className="mb-[1px] h-[13px] w-[13px] stroke-[#4a4a4a]"><path d="M6.5 .5V12.5M.5 6.5H12.5" strokeWidth="1.2" /></svg>
      </header>
      <nav className="h-[117px] shrink-0 border-y border-[#e0e0e0] bg-[#fcfcfc]">
        {PAGES.map(({ name, Icon, active }) => (
          <div key={name} className={active ? "flex h-[33px] items-center bg-[#3cc2ff] pl-[21px] pr-[15px] font-medium text-white" : "flex h-[32.6px] items-center pl-[21px] pr-[15px] text-[#454545]"}>
            <Icon className="mb-[2px] h-[13px] w-[14px]" />
            <span className="ml-[6px] flex-1 pb-[1px]">{name}</span>
            {active && <span className="pb-[1px]">2 of 3</span>}
          </div>
        ))}
      </nav>
      <ul className="shrink-0 pt-[4.5px]">
        {LAYERS.map((name) => (
          <li key={name} className="flex h-[32.9px] items-center whitespace-pre pl-[8px] text-[#0c0c0c]">
            <svg viewBox="0 0 4 6" className="h-[6px] w-[4px] fill-[#c4c4c4]"><path d="M0 0 4 3 0 6Z" /></svg>
            <SymbolIcon />
            <Rainbow className="ml-[7px] h-[14px] w-[14px]" />
            <span className="ml-[6px] w-[5px]">/</span>
            <Cheese className="mb-[1px] ml-[3px] h-[12px] w-[14px]" />
            <span className="ml-[6px] tracking-[0.09px]">/ {name}</span>
          </li>
        ))}
      </ul>
      <div className="absolute inset-x-0 bottom-0 flex h-[2px] bg-[#e0e0e0]">
        <div className="w-[46px] bg-[#3cc2ff]" />
      </div>
    </aside>
  );
}

export default function App() {
  return (
    <div className="flex h-[640px] w-[1440px] overflow-hidden bg-[#f7f7f7]">
      <Sidebar />
      <main className="relative flex-1 overflow-hidden">
        <LogoBoards />
        <TypeColumns />
        <Bread x={449} y={55} />
        <Bread x={557.6} y={55} />
        <IconSheet />
        <Buttons />
        <FormColumn x={774} dark={false} />
        <FormColumn x={824} dark />
        <DialogBoards />
        <ThemeColumn t={LIGHT} dx={0} />
        <ThemeColumn t={DARK} dx={184} />
        <At x={1343} y={35} w={2} h={2}>
          <Box x={1343.5} y={36} w={1.5} h={1.5} c={ORANGE} />
        </At>
      </main>
    </div>
  );
}
